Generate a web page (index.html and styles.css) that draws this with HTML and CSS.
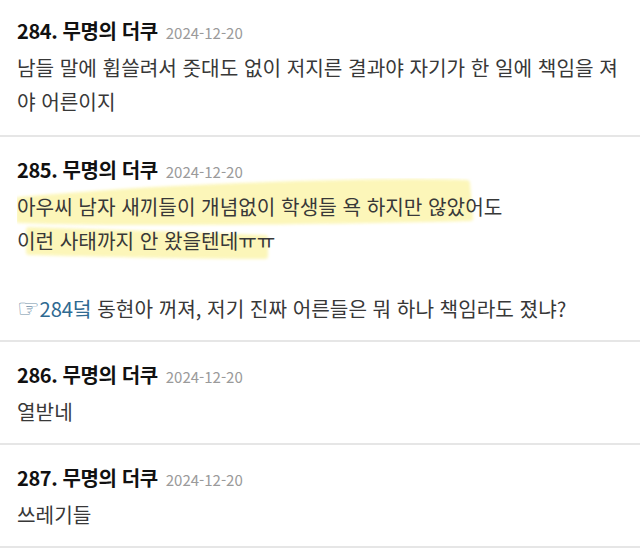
FILE: index.html
```html
<!DOCTYPE html>
<html lang="ko">
<head>
<meta charset="utf-8">
<link rel="stylesheet" href="styles.css">
</head>
<body>
<div class="list">
  <div class="post first">
    <div class="head"><span class="num">284. 무명의 더쿠</span><span class="date">2024-12-20</span></div>
    <div class="body">남들 말에 휩쓸려서 줏대도 없이 저지른 결과야 자기가 한 일에 책임을 져<br>야 어른이지</div>
  </div>
  <div class="post">
    <div class="head"><span class="num">285. 무명의 더쿠</span><span class="date">2024-12-20</span></div>
    <div class="body hlbody">
      <svg class="marker" width="606" height="100" viewBox="0 0 606 100" aria-hidden="true">
        <defs>
          <filter id="soft" x="-5%" y="-30%" width="110%" height="160%">
            <feGaussianBlur stdDeviation="1.8"/>
          </filter>
        </defs>
        <g filter="url(#soft)" fill="#fcf6b6" stroke="#fcf6b6" stroke-width="6" stroke-linejoin="round" opacity="0.95">
          <path d="M2 22 C 60 17, 120 12, 200 9 C 300 5, 400 3, 450 5 L 453 40 C 380 42, 250 44, 120 44 C 70 44, 30 43, 2 42 Z"/>
          <path d="M12 52 C 80 54, 170 57, 248 60 L 248 78 C 180 78, 90 76, 12 74 Z"/>
        </g>
      </svg>
      <div class="txt">아우씨 남자 새끼들이 개념없이 학생들 욕 하지만 않았어도<br>이런 사태까지 안 왔을텐데ㅠㅠ<br><br><span class="ref"><span class="hand">☞</span>284덬</span> 동현아 꺼져, 저기 진짜 어른들은 뭐 하나 책임라도 졌냐?</div>
    </div>
  </div>
  <div class="post">
    <div class="head"><span class="num">286. 무명의 더쿠</span><span class="date">2024-12-20</span></div>
    <div class="body">열받네</div>
  </div>
  <div class="post">
    <div class="head"><span class="num">287. 무명의 더쿠</span><span class="date">2024-12-20</span></div>
    <div class="body">쓰레기들</div>
  </div>
</div>
</body>
</html>
```

FILE: styles.css
```css
html, body {
  margin: 0;
  padding: 0;
  background: #ffffff;
}
body {
  font-family: "Noto Sans CJK KR", "Noto Sans", sans-serif;
  color: #333333;
}
.list {
  display: flex;
  flex-direction: column;
}
.post {
  padding: 16px 17px 14px 17px;
  border-bottom: 2px solid #e6e6e6;
}
.post.first {
  padding-top: 14px;
  padding-bottom: 16px;
}
.head {
  display: flex;
  align-items: baseline;
  gap: 8px;
  height: 34px;
  line-height: 34px;
  margin-bottom: 3px;
}
.num {
  font-size: 20px;
  font-weight: 700;
  color: #111111;
  letter-spacing: -0.4px;
}
.date {
  font-size: 15px;
  color: #9a9a9a;
}
.body {
  font-size: 20.2px;
  line-height: 34px;
  color: #383838;
  white-space: nowrap;
}
.hlbody {
  position: relative;
}
.marker {
  position: absolute;
  left: 0;
  top: -12px;
}
.txt {
  position: relative;
}
.ref {
  color: #2f6a92;
}
.hand {
  font-family: "DejaVu Sans", sans-serif;
  color: #6f8ea8;
  font-size: 25px;
  line-height: 1;
}
```
